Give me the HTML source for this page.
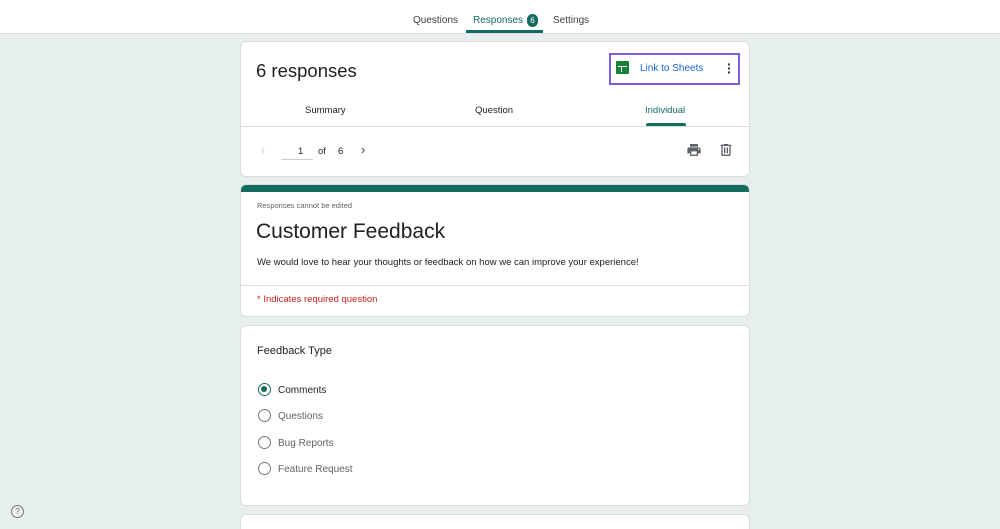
<!DOCTYPE html>
<html><head><style>
*{margin:0;padding:0;box-sizing:border-box}
html,body{width:1000px;height:529px;overflow:hidden}
body{background:#e6efee;font-family:"Liberation Sans",Arial,sans-serif;position:relative;color:#202124}
.top{position:absolute;left:0;top:0;width:1000px;height:34px;background:#fff;border-bottom:1px solid #dadce0}
.t{position:absolute;top:15px;font-size:10px;color:#3c4043}
.card{position:absolute;left:240px;width:510px;background:#fff;border-radius:6px;border:1px solid #dadce0}
.abs{position:absolute}
.radio{position:absolute;left:17px;width:13px;height:13px;border:1.5px solid #777;border-radius:50%}
.opt{position:absolute;left:37px;font-size:10px;color:#5f6368}
</style></head><body>
<div class="top">
<div class="t" style="left:413px">Questions</div>
<div class="t" style="left:473px;color:#146c5f">Responses</div>
<div class="abs" style="left:527px;top:14px;width:11px;height:13px;border-radius:6px;background:#146c5f;color:#fff;font-size:8px;text-align:center;line-height:13px">6</div>
<div class="abs" style="left:466px;top:30px;width:77px;height:3px;background:#146c5f"></div>
<div class="t" style="left:553px">Settings</div>
</div>
<div class="card" style="top:41px;height:136px">
<div class="abs" style="left:15px;top:18px;font-size:18.5px">6 responses</div>
<div class="abs" style="left:368px;top:11px;width:131px;height:32px;border:2px solid #7c5ce0"></div>
<div class="abs" style="left:375px;top:19px;width:13px;height:13px;background:#188038;border-radius:1px"><div class="abs" style="left:2px;top:5px;width:9px;height:1px;background:#fff"></div><div class="abs" style="left:5px;top:5px;width:1px;height:6px;background:#fff"></div></div>
<div class="abs" style="left:399px;top:21px;font-size:10px;color:#1967d2">Link to Sheets</div>
<div class="abs" style="left:486px;top:20px;font-size:14px;line-height:4px;color:#333;font-weight:bold">·<br>·<br>·</div>
<div class="abs" style="left:64px;top:63px;font-size:9.5px">Summary</div>
<div class="abs" style="left:234px;top:63px;font-size:9.5px">Question</div>
<div class="abs" style="left:404px;top:63px;font-size:9.5px;color:#146c5f">Individual</div>
<div class="abs" style="left:405px;top:81px;width:40px;height:3px;background:#146c5f;border-radius:2px 2px 0 0"></div>
<div class="abs" style="left:0;top:84px;width:508px;height:1px;background:#dadce0"></div>
<div class="abs" style="left:20px;top:101px;font-size:12px;color:#ccc">‹</div>
<div class="abs" style="left:57px;top:104px;font-size:9.5px">1</div>
<div class="abs" style="left:40px;top:117px;width:32px;height:1px;background:#ccc"></div>
<div class="abs" style="left:77px;top:104px;font-size:9.5px">of</div>
<div class="abs" style="left:97px;top:104px;font-size:9.5px">6</div>
<div class="abs" style="left:120px;top:100px;font-size:13px;color:#444">›</div>
<svg class="abs" style="left:445px;top:100px" width="16" height="16" viewBox="0 0 24 24"><path fill="#5f6368" d="M19 8H5c-1.66 0-3 1.34-3 3v6h4v4h12v-4h4v-6c0-1.66-1.34-3-3-3zm-3 11H8v-5h8v5zm3-7c-.55 0-1-.45-1-1s.45-1 1-1 1 .45 1 1-.45 1-1 1zm-1-9H6v4h12V3z"/></svg>
<svg class="abs" style="left:477px;top:100px" width="16" height="16" viewBox="0 0 24 24"><path fill="#5f6368" d="M15 4V3H9v1H4v2h1v13c0 1.1.9 2 2 2h10c1.1 0 2-.9 2-2V6h1V4h-5zm2 15H7V6h10v13zM9 8h2v9H9zm4 0h2v9h-2z"/></svg>
</div>
<div class="card" style="top:184px;height:133px;overflow:hidden">
<div class="abs" style="left:0;top:0;width:510px;height:7px;background:#146c5f"></div>
<div class="abs" style="left:16px;top:16px;font-size:7.5px;color:#5f6368">Responses cannot be edited</div>
<div class="abs" style="left:15px;top:35px;font-size:21px">Customer Feedback</div>
<div class="abs" style="left:16px;top:72px;font-size:9.5px">We would love to hear your thoughts or feedback on how we can improve your experience!</div>
<div class="abs" style="left:0;top:100px;width:510px;height:1px;background:#dadce0"></div>
<div class="abs" style="left:16px;top:109px;font-size:9.5px;color:#c5221f">* Indicates required question</div>
</div>
<div class="card" style="top:325px;height:181px">
<div class="abs" style="left:16px;top:19px;font-size:11px">Feedback Type</div>
<div class="radio" style="top:57px;border-color:#146c5f"><div class="abs" style="left:2px;top:2px;width:6px;height:6px;border-radius:50%;background:#146c5f"></div></div>
<div class="opt" style="top:59px;color:#202124">Comments</div>
<div class="radio" style="top:83px"></div><div class="opt" style="top:85px">Questions</div>
<div class="radio" style="top:110px"></div><div class="opt" style="top:112px">Bug Reports</div>
<div class="radio" style="top:136px"></div><div class="opt" style="top:138px">Feature Request</div>
</div>
<div class="card" style="top:514px;height:15px;border-radius:6px 6px 0 0;border-bottom:none"></div>
<div class="abs" style="left:11px;top:505px;width:13px;height:13px;border:1.2px solid #777;border-radius:50%;font-size:8px;text-align:center;line-height:11px;color:#777">?</div>
</body></html>
